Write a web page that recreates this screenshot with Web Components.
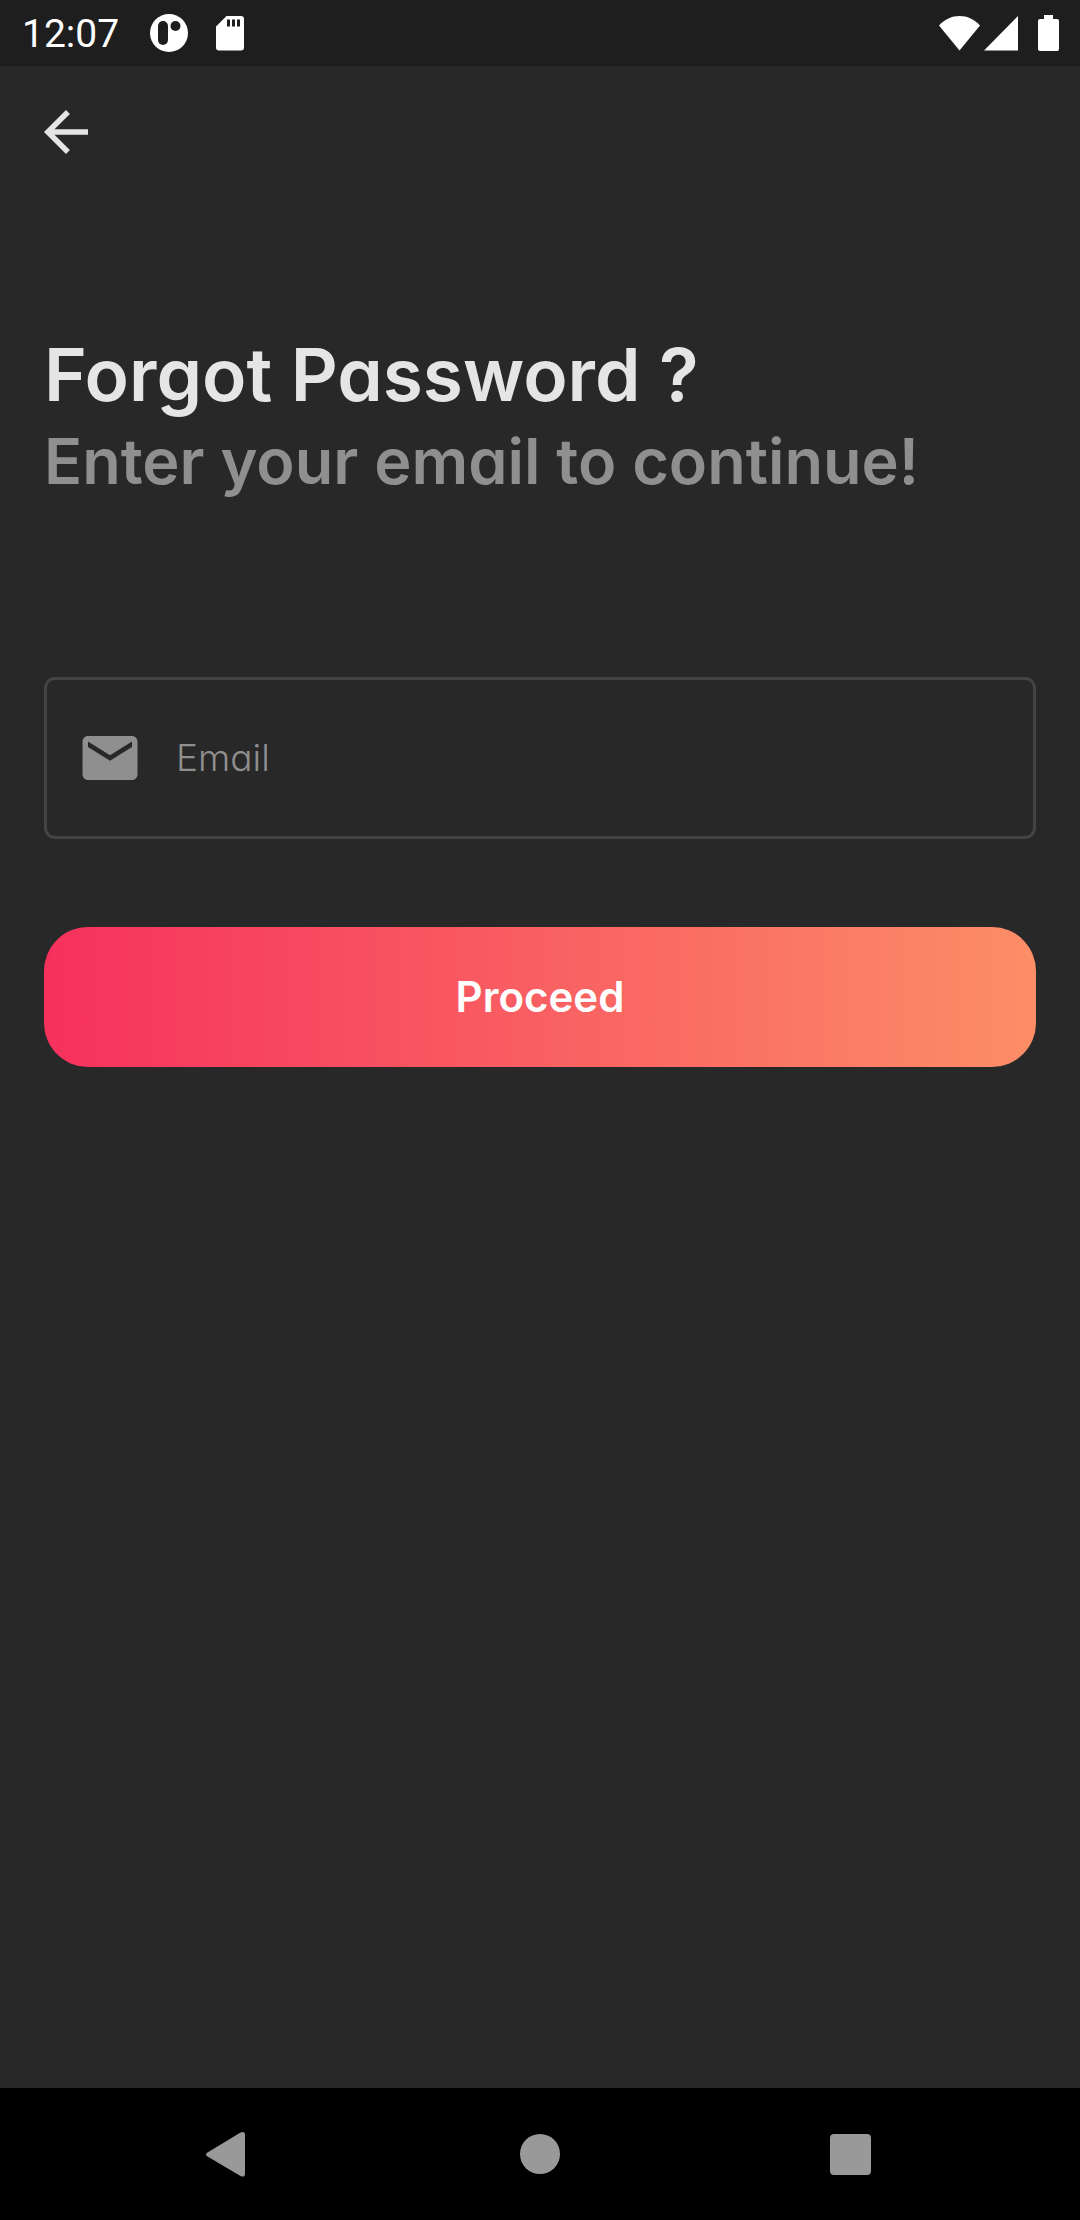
<!DOCTYPE html>
<html lang="en">
<head>
<meta charset="utf-8">
<meta name="viewport" content="width=device-width, initial-scale=1">
<title>Forgot Password</title>
<style>
  html, body { margin: 0; background: #282828; }
  body { font-family: Inter, "Open Sans", sans-serif; font-feature-settings: "cv11" 1; color: #e5e5e5; }
</style>
</head>
<body>
<app-screen>
  <status-bar slot="top" time="12:07"></status-bar>
  <back-button></back-button>
  <page-heading><span slot="title">Forgot Password ?</span><span slot="subtitle">Enter your email to continue!</span></page-heading>
  <email-field label="Email"></email-field>
  <gradient-button>Proceed</gradient-button>
  <nav-bar slot="bottom"></nav-bar>
</app-screen>
<script>
const define = (name, html) => customElements.define(name, class extends HTMLElement {
  constructor() {
    super();
    const t = document.createElement('template');
    t.innerHTML = typeof html === 'function' ? html(this) : html;
    this.attachShadow({ mode: 'open' }).append(t.content.cloneNode(true));
  }
});

define('app-screen', `
  <style>
    :host { display: flex; flex-direction: column; min-height: 100vh; }
    main { flex: 1; display: flex; flex-direction: column; padding: 0 44px; }
  </style>
  <slot name="top"></slot><main><slot></slot></main><slot name="bottom"></slot>`);

define('status-bar', el => `
  <style>
    :host { display: flex; align-items: center; height: 66px; padding: 0 21px 0 22px; background: #1e1e1e; color: #fff; font-family: Roboto, sans-serif; font-size: 39px; }
    svg { display: block; fill: currentColor; }
    time { margin-right: 31px; line-height: 66px; padding-top: 2px; }
    .sd { margin-left: 28px; }
    .wifi { margin-left: auto; }
    .signal { margin-left: 4px; }
    .battery { margin-left: 20px; }
  </style>
  <time>${el.getAttribute('time')}</time>
  <svg width="38" height="38" viewBox="0 0 38 38"><circle cx="19" cy="19" r="19"/><rect x="8" y="7" width="10" height="24" rx="5" fill="#1e1e1e"/><circle cx="25.500" cy="12" r="5" fill="#1e1e1e"/></svg>
  <svg class="sd" width="28" height="36" viewBox="0 0 28 36"><path fill-rule="evenodd" d="M10.500 1H25q3 0 3 3v28.500q0 3-3 3H3q-3 0-3-3V11.500zM11 4.500v7h3v-7zm5 0v7h3v-7zm5 0v7h3v-7z"/></svg>
  <svg class="wifi" width="41" height="36" viewBox="0 0 41 36"><path d="M0 10.500C11-2.300 30-2.300 41 10.500L20.500 35.500z"/></svg>
  <svg class="signal" width="34" height="36" viewBox="0 0 34 36"><path d="M34 1v34.500H0z"/></svg>
  <svg class="battery" width="21" height="36" viewBox="0 0 21 36"><path d="M6 0h9v4h4q2 0 2 2v28q0 2-2 2H2q-2 0-2-2V6q0-2 2-2h4z"/></svg>`);

define('back-button', `
  <style>
    :host { display: flex; padding: 33px 0; margin-left: -11px; }
    button { padding: 0; border: 0; background: none; color: #e5e5e5; }
    svg { display: block; }
  </style>
  <button type="button" aria-label="Back"><svg width="66" height="66" viewBox="0 0 24 24" fill="currentColor"><path d="M20 11H7.830l5.590-5.590L12 4l-8 8 8 8 1.410-1.410L7.830 13H20v-2z"/></svg></button>`);

define('page-heading', `
  <style>
    :host { display: block; margin-top: 131px; }
    h1, p { margin: 0; white-space: nowrap; font-weight: 600; }
    h1 { font-size: 73px; line-height: 92px; }
    p { font-size: 63px; line-height: 80px; color: #8f8f8f; }
  </style>
  <h1><slot name="title"></slot></h1><p><slot name="subtitle"></slot></p>`);

define('email-field', el => `
  <style>
    :host { display: block; margin-top: 176px; }
    label { display: flex; align-items: center; gap: 33px; height: 162px; box-sizing: border-box; padding: 0 30px; border: 3px solid #444; border-radius: 11px; color: #8f8f8f; }
    svg { flex: none; }
    input { flex: 1; min-width: 0; padding: 0; border: 0; outline: 0; background: none; color: #e5e5e5; font: 300 37px/48px Inter, sans-serif; font-feature-settings: inherit; }
    input::placeholder { color: #8f8f8f; opacity: 1; }
  </style>
  <label><svg width="66" height="66" viewBox="0 0 24 24" fill="currentColor" aria-hidden="true"><path d="M20 4H4c-1.100 0-1.990.9-1.990 2L2 18c0 1.100.9 2 2 2h16c1.100 0 2-.9 2-2V6c0-1.100-.9-2-2-2zm0 4l-8 5-8-5V6l8 5 8-5v2z"/></svg>
  <input type="email" aria-label="${el.getAttribute('label')}" placeholder="${el.getAttribute('label')}"></label>`);

define('gradient-button', `
  <style>
    :host { display: block; margin-top: 88px; }
    button { display: block; width: 100%; height: 140px; padding: 0; border: 0; border-radius: 44px; background: linear-gradient(90deg, #f6315d, #fc8e67); color: #fff; font: 600 42px/48px Inter, sans-serif; font-feature-settings: inherit; }
  </style>
  <button type="button"><slot></slot></button>`);

define('nav-bar', `
  <style>
    :host { display: block; background: #000; }
    nav { display: flex; height: 132px; padding: 0 6.8%; }
    button { flex: 1; display: flex; align-items: center; justify-content: center; padding: 0; border: 0; background: none; color: #999; }
    svg { display: block; fill: currentColor; }
  </style>
  <nav aria-label="System">
    <button type="button" aria-label="Back"><svg width="48" height="48" viewBox="0 0 48 48"><path d="M2.500 22.500 35.500 2.600Q40 .5 40 5V43.500Q40 48 35.500 46L2.500 26.500Q-.5 24.500 2.500 22.500z"/></svg></button>
    <button type="button" aria-label="Home"><svg width="48" height="48" viewBox="0 0 48 48"><circle cx="24" cy="24" r="20"/></svg></button>
    <button type="button" aria-label="Recent apps"><svg width="48" height="48" viewBox="0 0 48 48"><rect x="3" y="4" width="41" height="41" rx="4"/></svg></button>
  </nav>`);
</script>
</body>
</html>
